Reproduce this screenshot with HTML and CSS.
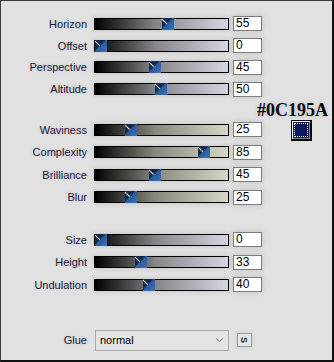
FILE: index.html
```html
<!DOCTYPE html>
<html lang="en">
<head>
  <meta charset="UTF-8">
  <title>Wave settings</title>
  <link rel="stylesheet" href="styles.css">
</head>
<body>
  <div class="panel">
    <div class="main">
      <div class="group first cool">
        <div class="row"><span class="label">Horizon</span><div class="track"><span class="thumb" style="left:67px"></span></div><div class="num">55</div></div>
        <div class="row"><span class="label">Offset</span><div class="track"><span class="thumb" style="left:0px"></span></div><div class="num">0</div></div>
        <div class="row"><span class="label">Perspective</span><div class="track"><span class="thumb" style="left:54px"></span></div><div class="num">45</div></div>
        <div class="row"><span class="label">Altitude</span><div class="track"><span class="thumb" style="left:60px"></span></div><div class="num">50</div></div>
      </div>

      <div class="group second warm">
        <div class="row"><span class="label">Waviness</span><div class="track"><span class="thumb" style="left:30px"></span></div><div class="num">25</div></div>
        <div class="row"><span class="label">Complexity</span><div class="track"><span class="thumb" style="left:103px"></span></div><div class="num">85</div></div>
        <div class="row"><span class="label">Brilliance</span><div class="track"><span class="thumb" style="left:54px"></span></div><div class="num">45</div></div>
        <div class="row"><span class="label">Blur</span><div class="track"><span class="thumb" style="left:30px"></span></div><div class="num">25</div></div>
      </div>

      <div class="group third cool">
        <div class="row"><span class="label">Size</span><div class="track"><span class="thumb" style="left:0px"></span></div><div class="num">0</div></div>
        <div class="row"><span class="label">Height</span><div class="track"><span class="thumb" style="left:40px"></span></div><div class="num">33</div></div>
        <div class="row"><span class="label">Undulation</span><div class="track"><span class="thumb" style="left:48px"></span></div><div class="num">40</div></div>
      </div>

      <div class="glue">
        <span class="label">Glue</span>
        <div class="select">
          <span>normal</span>
          <svg width="9" height="6" viewBox="0 0 9 6"><path d="M1 1.5 L4.5 4.5 L8 1.5" fill="none" stroke="#777" stroke-width="1"/></svg>
        </div>
        <div class="sbtn"><span>S</span></div>
      </div>
    </div>

    <div class="side">
      <div class="hex">#0C195A</div>
      <div class="swatch"></div>
    </div>
  </div>
</body>
</html>
```

FILE: styles.css
```css
* {
  box-sizing: border-box;
}

body {
  margin: 0;
  background-color: #e1e1e1;
  font-family: "Liberation Sans", Arial, sans-serif;
}

.panel {
  display: flex;
  width: 334px;
  height: 362px;
  background-color: #e1e1e1;
  border: 1px solid #3a3a3a;
  border-right: 2px solid #111;
  border-bottom: 2px solid #111;
  padding-top: 12px;
}

.main {
  width: 262px;
  flex: none;
}

.group.second {
  margin-top: 18.6px;
}

.group.third {
  margin-top: 20px;
}

.row {
  display: flex;
  align-items: center;
  height: 22.5px;
}

.group.first .row {
  height: 21.75px;
}

.label {
  width: 87px;
  padding-right: 1px;
  text-align: right;
  font-size: 11px;
  color: #17173a;
  text-shadow: 0 0 4px rgba(0,0,0,0.12);
}

.track {
  position: relative;
  width: 135px;
  height: 12px;
  margin-left: 6px;
  border: 1px solid #000;
  box-shadow: 0 0 5px 1px rgba(0,0,0,0.1);
}

.cool .track {
  background: linear-gradient(to right, #000, #858589 45%, #d5d5e3);
}

.warm .track {
  background: linear-gradient(to right, #000, #87877e 45%, #d7d7c7);
}

/* slider knob: dark upper-left bevel, white glint, blue face */
.thumb {
  position: absolute;
  top: -1px;
  width: 12px;
  height: 12px;
  background: linear-gradient(135deg, #14284a 0 40%, #2b5c9c 48%, #3a72b6);
}

.thumb::before {
  content: "";
  position: absolute;
  top: 3px;
  left: -1px;
  width: 7px;
  height: 1px;
  background-color: #f2f5fa;
  transform: rotate(45deg);
}

.num {
  width: 29px;
  height: 15px;
  margin-left: 4px;
  padding-left: 2px;
  border: 1px solid #7c7c7c;
  background-color: #fff;
  font-size: 12px;
  line-height: 13px;
  color: #000;
  box-shadow: 0 0 5px 1px rgba(0,0,0,0.1);
}

.glue {
  display: flex;
  align-items: center;
  margin-top: 33.5px;
  height: 21px;
}

.select {
  display: flex;
  align-items: center;
  justify-content: space-between;
  width: 134px;
  height: 21px;
  margin-left: 7px;
  padding: 0 4px 0 4px;
  border: 1px solid #a9a9a9;
  background-color: #e4e4e4;
  font-size: 11px;
  color: #000;
}

.sbtn {
  display: flex;
  align-items: center;
  justify-content: center;
  width: 15px;
  height: 14px;
  margin-left: 8px;
  border: 1px solid #9a9a9a;
  background-color: #e6e6e6;
  box-shadow: 0 0 4px rgba(0,0,0,0.12);
}

.sbtn span {
  display: block;
  transform: rotate(90deg);
  font-size: 9px;
  font-weight: bold;
  color: #222;
}

.side {
  margin-left: -6px;
  margin-top: 87px;
}

.hex {
  font-family: "Liberation Serif", "Times New Roman", serif;
  font-weight: bold;
  font-size: 18px;
  line-height: 20px;
  color: #0a0a0a;
  text-shadow: 0 0 4px rgba(0,0,0,0.15);
}

.swatch {
  position: relative;
  width: 21px;
  height: 21px;
  margin-left: 34px;
  border: 1px solid #000;
  border-right-width: 2px;
  border-bottom-width: 2px;
  background-color: #0C195A;
  box-shadow: inset 1px 1px 0 #fff, inset -1px -1px 0 #888;
}

.swatch::after {
  content: "";
  position: absolute;
  top: 2px;
  left: 2px;
  right: 2px;
  bottom: 2px;
  border: 1px dotted #fff;
}
```
